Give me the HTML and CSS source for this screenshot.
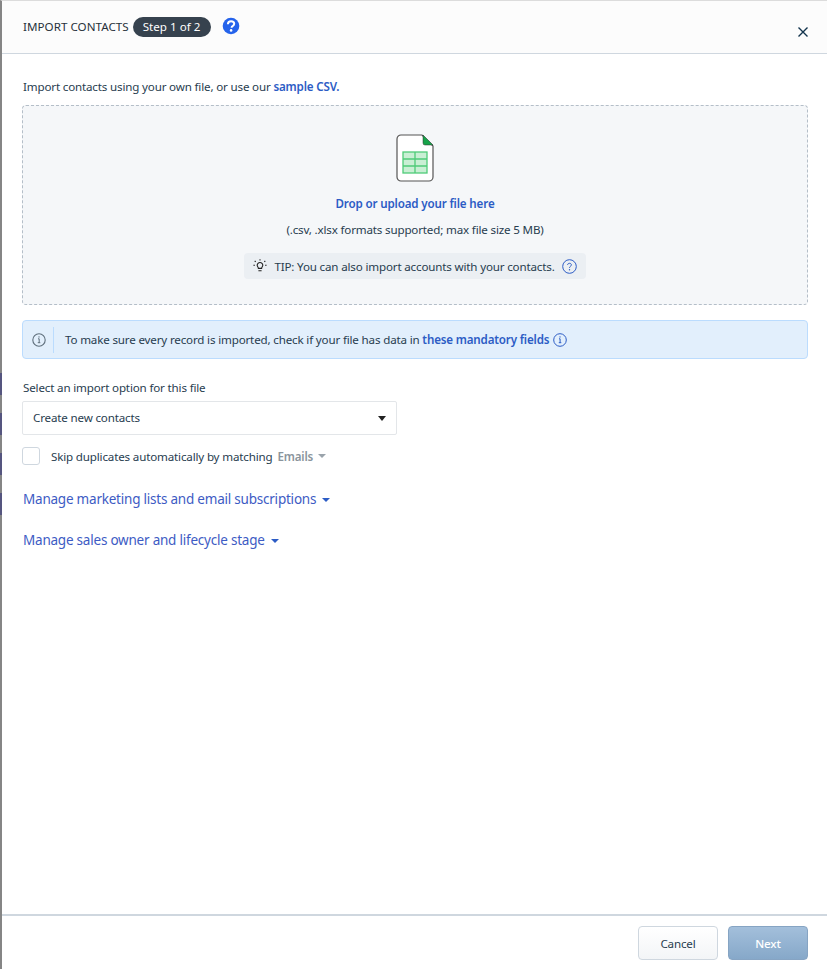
FILE: index.html
```html
<!DOCTYPE html>
<html lang="en">
<head>
<meta charset="utf-8">
<title>Import contacts</title>
<link rel="stylesheet" href="styles.css">
</head>
<body>
<div class="backdrop-sliver"></div>
<div class="modal">
  <header class="head">
    <span class="title">IMPORT CONTACTS</span>
    <span class="step">Step 1 of 2</span>
    <svg class="help" width="18" height="18" viewBox="0 0 18 18"><circle cx="9" cy="9" r="8.300" fill="#2563eb"/><path d="M5.900 7.200c0-1.900 1.300-3 3.200-3 1.800 0 3.100 1.100 3.100 2.600 0 1.300-.8 1.900-1.600 2.400-.7.400-1 .7-1 1.500" fill="none" stroke="#fff" stroke-width="2"/><circle cx="9.100" cy="13.400" r="1.300" fill="#fff"/></svg>
    <svg class="close" width="10" height="10" viewBox="0 0 10 10"><path d="M.5.5l9 9M9.500.5l-9 9" stroke="#12344d" stroke-width="1.400"/></svg>
  </header>
  <main class="body">
    <p class="intro">Import contacts using your own file, or use our <a class="strong-link">sample CSV.</a></p>
    <section class="drop">
      <svg class="file" width="38" height="49" viewBox="0 0 38 49">
        <path d="M5 1h21l11 11v31a4 4 0 0 1-4 4H5a4 4 0 0 1-4-4V5a4 4 0 0 1 4-4z" fill="#fff" stroke="#555" stroke-width="1.200"/>
        <path d="M27 1l10 10h-8a2 2 0 0 1-2-2z" fill="#17a34a" stroke="#333" stroke-width=".5"/>
        <rect x="7" y="18" width="24" height="21" fill="#c9efd4" stroke="#4fcb78" stroke-width="1.300"/>
        <path d="M7 25h24M7 32h24M19 18v21" stroke="#4fcb78" stroke-width="1.300"/>
      </svg>
      <div class="drop-title">Drop or upload your file here</div>
      <div class="drop-note">(.csv, .xlsx formats supported; max file size 5 MB)</div>
      <div class="tip">
        <svg width="14" height="14" viewBox="0 0 14 14" fill="none" stroke="#222" stroke-width="1.100"><path d="M4.200 6.300a2.800 2.800 0 1 1 5.600 0c0 1.100-1.100 1.800-1.200 3.100H5.400c-.1-1.300-1.200-2-1.200-3.100zM5.400 11.700h3.200M7 .2v1.200M1.700 1.800l1 1M12.300 1.800l-1 1M.4 6.300h1.500M12.100 6.300h1.500"/></svg>
        <span class="tip-text">TIP: You can also import accounts with your contacts.</span>
        <svg width="15" height="15" viewBox="0 0 15 15" fill="none"><circle cx="7.500" cy="7.500" r="6.800" stroke="#2c5cc5" stroke-width="1"/><path d="M5.600 6c0-1.100.8-1.700 1.900-1.700s1.900.7 1.900 1.600c0 1.400-1.900 1.400-1.900 2.900" stroke="#2c5cc5" stroke-width="1"/><circle cx="7.500" cy="10.800" r=".7" fill="#2c5cc5"/></svg>
      </div>
    </section>
    <section class="notice">
      <svg class="notice-icon" width="14" height="14" viewBox="0 0 14 14" fill="none"><circle cx="7" cy="7" r="6.200" stroke="#5f6f7c" stroke-width="1.100"/><path d="M6 5.800h1.200v3.800M5.800 9.700h2.500" stroke="#5f6f7c" stroke-width="1"/><circle cx="7" cy="3.900" r=".7" fill="#5f6f7c"/></svg>
      <span class="notice-rule"></span>
      <span class="notice-text">To make sure every record is imported, check if your file has data in <a class="strong-link">these mandatory fields</a></span>
      <svg class="notice-info" width="14" height="14" viewBox="0 0 14 14" fill="none"><circle cx="7" cy="7" r="6.300" stroke="#2c5cc5" stroke-width="1"/><path d="M6 5.800h1.100v3.800M5.800 9.700h2.500" stroke="#2c5cc5" stroke-width="1"/><circle cx="7" cy="3.900" r=".7" fill="#2c5cc5"/></svg>
    </section>
    <label class="field-label">Select an import option for this file</label>
    <div class="select"><span>Create new contacts</span><i class="caret caret-dark"></i></div>
    <div class="skip">
      <span class="check"></span>
      <span>Skip duplicates automatically by matching</span>
      <span class="skip-field">Emails</span>
      <i class="caret caret-grey"></i>
    </div>
    <div class="manage"><span>Manage marketing lists and email subscriptions</span><i class="caret caret-blue"></i></div>
    <div class="manage"><span>Manage sales owner and lifecycle stage</span><i class="caret caret-blue"></i></div>
  </main>
  <footer class="foot">
    <button class="btn btn-cancel">Cancel</button>
    <button class="btn btn-next">Next</button>
  </footer>
</div>
</body>
</html>
```
FILE: styles.css
```css
* { box-sizing: border-box; }
html, body { margin: 0; height: 100%; overflow: hidden; }
body { font-family: "Noto Sans", "Open Sans", sans-serif; font-size: 11.600px; letter-spacing: -0.165px; color: #12344d; background: #fff; }
.backdrop-sliver { position: absolute; left: 0; top: 373px; width: 2px; height: 142px; background: repeating-linear-gradient(#55557f 0 22px, #858585 22px 40px); z-index: 1; }
.modal { height: 969px; border-left: 2px solid #858585; border-top: 1px solid #dcdcdc; display: flex; flex-direction: column; }
.head { height: 53px; flex: none; display: flex; align-items: flex-start; padding: 16px 19px 0 21px; background: #fcfcfc; border-bottom: 1px solid #cfd7df; }
.title { line-height: 20px; color: #27313b; letter-spacing: 0.035px; }
.step { margin-left: 4px; height: 20px; line-height: 20px; padding: 0 10px; border-radius: 10px; background: #36424e; color: #fff; letter-spacing: 0.035px; }
.help { margin: 0 0 0 11px; }
.close { margin: 10px 0 0 auto; }
.body { flex: 1; padding: 0 19px 0 20px; }
.intro { margin: 0; padding: 25px 0 0 1px; line-height: 16px; color: #283d4f; }
.strong-link { color: #2c5cc5; font-weight: 600; letter-spacing: -0.165px; }
.drop { height: 200px; margin-top: 10px; border: 1px dashed #b4bec8; border-radius: 4px; background: #f5f7f9; display: flex; flex-direction: column; align-items: center; padding-top: 28px; }
.file { display: block; }
.drop-title { margin-top: 13px; line-height: 16px; color: #2c5cc5; font-weight: 600; letter-spacing: -0.15px; }
.drop-note { margin-top: 10px; line-height: 16px; color: #283d4f; }
.tip { margin-top: 15px; height: 26px; padding: 0 9px; background: #ebeff3; border-radius: 4px; display: flex; align-items: center; gap: 7px; }
.tip-text { color: #283d4f; }
.notice { height: 39px; margin-top: 15px; background: #e2effc; border: 1px solid #bbdcfe; border-radius: 4px; display: flex; align-items: center; padding-left: 9px; }
.notice-rule { width: 1px; height: 26px; background: #bbdcfe; margin: 0 11px 0 7px; }
.notice-text { color: #283d4f; }
.notice-info { margin-left: 4px; }
.field-label { display: block; margin: 21px 0 0 1px; line-height: 16px; color: #283d4f; }
.select { width: 375px; height: 34px; margin-top: 5px; border: 1px solid #e3e6e9; border-radius: 2px; background: #fff; display: flex; align-items: center; justify-content: space-between; padding: 0 10px 2px 10px; color: #283d4f; }
.caret { display: inline-block; width: 0; height: 0; border-style: solid; border-width: 4px 4px 0; border-color: currentColor transparent transparent; }
.caret-dark { color: #222; border-width: 5px 4px 0; margin-top: 2px; }
.caret-grey { color: #9aa3ab; margin-left: 5px; }
.caret-blue { color: #2c5cc5; margin-left: 6px; }
.skip { display: flex; align-items: center; height: 18px; margin-top: 12px; color: #283d4f; }
.check { width: 18px; height: 18px; border: 1px solid #cfd7df; border-radius: 3px; margin-right: 11px; background: #fff; }
.skip-field { margin-left: 5px; color: #8a949c; font-weight: 600; }
.manage { margin: 24px 0 0 1px; height: 17px; line-height: 17px; font-size: 13.500px; letter-spacing: -0.22px; color: #3d5bc4; display: flex; align-items: center; }
.skip + .manage { margin-top: 26px; }
.foot { height: 55px; flex: none; border-top: 2px solid #cfd7df; display: flex; justify-content: flex-end; gap: 10px; padding: 10px 19px 0 0; }
.btn { width: 80px; height: 34px; border-radius: 4px; font: inherit; letter-spacing: inherit; }
.btn-cancel { background: linear-gradient(#fff, #f3f5f7); border: 1px solid #cfd7df; color: #283d4f; }
.btn-next { background: linear-gradient(#a3bfdb, #86a8c9); border: 1px solid #86a4c3; color: #fff; font-weight: 500; }
```
